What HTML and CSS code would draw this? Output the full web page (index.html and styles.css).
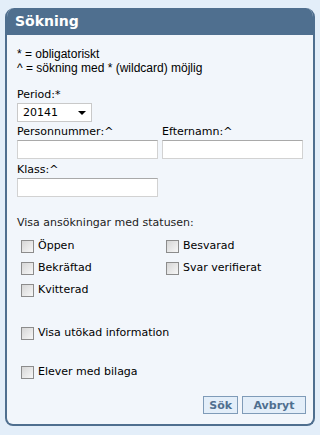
FILE: index.html
```html
<!DOCTYPE html>
<html lang="sv">
<head>
<meta charset="UTF-8">
<title>Sökning</title>
<link rel="stylesheet" href="styles.css">
</head>
<body>
<div class="panel">
    <div class="panel-head">Sökning</div>
    <div class="panel-body">
        <div class="legend">
            <div>* = obligatoriskt</div>
            <div>^ = sökning med * (wildcard) möjlig</div>
        </div>

        <div class="field">
            <label>Period:*</label>
            <div class="select"><span>20141</span><span class="arrow"></span></div>
        </div>

        <div class="row">
            <div class="field">
                <label>Personnummer:^</label>
                <input type="text" class="text">
            </div>
            <div class="field">
                <label>Efternamn:^</label>
                <input type="text" class="text">
            </div>
        </div>

        <div class="field">
            <label>Klass:^</label>
            <input type="text" class="text">
        </div>

        <div class="status-title">Visa ansökningar med statusen:</div>
        <div class="status-grid">
            <label class="check"><span class="box"></span>Öppen</label>
            <label class="check"><span class="box"></span>Besvarad</label>
            <label class="check"><span class="box"></span>Bekräftad</label>
            <label class="check"><span class="box"></span>Svar verifierat</label>
            <label class="check"><span class="box"></span>Kvitterad</label>
        </div>

        <label class="check extra first"><span class="box"></span>Visa utökad information</label>
        <label class="check extra"><span class="box"></span>Elever med bilaga</label>

        <div class="buttons">
            <button class="btn">Sök</button>
            <button class="btn wide">Avbryt</button>
        </div>
    </div>
</div>
</body>
</html>
```

FILE: styles.css
```css
body {
    margin: 0;
    background: #e3eef9;
    font-family: "DejaVu Sans", Verdana, sans-serif;
    font-size: 11px;
    color: #000;
}

.panel {
    margin: 8px 5px 0 5px;
    width: 306px;
    border: 2px solid #4f6f8f;
    border-top: 0;
    border-radius: 9px 9px 8px 8px;
    background: #f2f6fb;
    overflow: hidden;
}

.panel-head {
    background: #4f6f8f;
    color: #fff;
    font-weight: bold;
    font-size: 14px;
    height: 27px;
    line-height: 27px;
    padding-left: 8px;
}

.panel-body {
    padding: 12px 7px 10px 10px;
    display: flex;
    flex-direction: column;
}

.legend {
    font-family: "Liberation Sans", Arial, sans-serif;
    font-size: 12px;
    line-height: 14px;
    margin-bottom: 13px;
}

.field {
    display: flex;
    flex-direction: column;
    align-items: flex-start;
}

.field label {
    line-height: 14px;
    margin-bottom: 1px;
}

.row {
    display: flex;
    gap: 4px;
    margin-top: 3px;
}

.select {
    width: 75px;
    height: 19px;
    box-sizing: border-box;
    background: #fff;
    border: 1px solid #c9c9c9;
    display: flex;
    align-items: center;
    justify-content: space-between;
    padding: 0 5px 0 5px;
}

.arrow {
    width: 0;
    height: 0;
    border-left: 4px solid transparent;
    border-right: 4px solid transparent;
    border-top: 4px solid #000;
}

.text {
    width: 141px;
    height: 19px;
    box-sizing: border-box;
    margin: 0 0 4px 0;
    border: 1px solid #d2d2d2;
    border-top-color: #a9a9a9;
    background: #fff;
}

.status-title {
    margin-top: 15px;
    line-height: 14px;
    color: #222;
}

.status-grid {
    display: grid;
    grid-template-columns: 145px auto;
    row-gap: 8px;
    margin-top: 9px;
    padding-left: 4px;
}

.check {
    display: flex;
    align-items: center;
    gap: 4px;
    line-height: 14px;
}

.box {
    width: 11px;
    height: 11px;
    border: 1px solid #8c8c8c;
    background: linear-gradient(135deg, #d6d6d6, #f7f7f7);
}

.extra {
    margin-top: 25px;
    padding-left: 4px;
}

.extra.first {
    margin-top: 29px;
}

.buttons {
    display: flex;
    justify-content: flex-end;
    gap: 4px;
    margin-top: 17px;
}

.btn {
    font-family: "DejaVu Sans", Verdana, sans-serif;
    font-size: 11px;
    font-weight: bold;
    color: #4f6f8f;
    background: #e3eef9;
    border: 1px solid #7f9bb8;
    height: 18px;
    padding: 0 5px;
}

.btn.wide {
    width: 64px;
}
```
